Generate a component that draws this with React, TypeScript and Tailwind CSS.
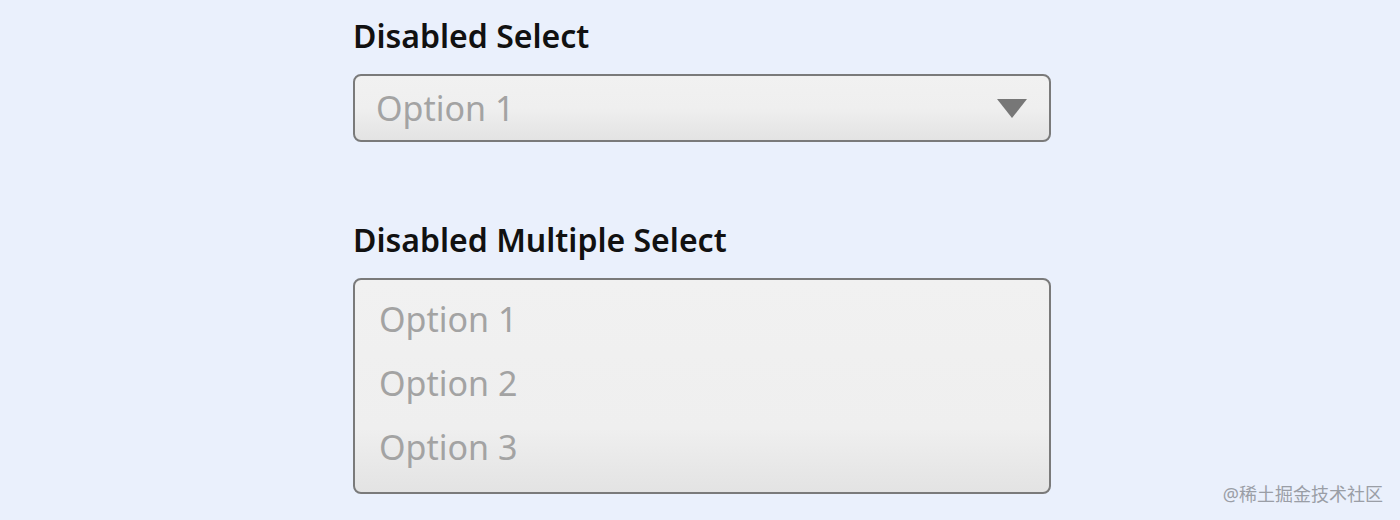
export default function App() {
  return (
    <div className="relative h-[520px] w-[1400px] overflow-hidden bg-[#eaf0fc] font-['Noto_Sans',sans-serif]">
      <div className="ml-[353px] flex w-[698px] flex-col pt-[14px]">
        <label className="text-[32px] font-semibold leading-[44px] text-[#111]">Disabled Select</label>
        <div className="mt-[16px] flex h-[68px] items-center justify-between rounded-[8px] border-2 border-[#7a7a7a] bg-gradient-to-b from-[#f1f1f1] via-[#efefef] to-[#e3e3e3] pl-[21px] pr-[22px]">
          <span className="text-[34px] leading-none text-[#a3a3a3]">Option 1</span>
          <svg width="30" height="20" viewBox="0 0 30 20" className="mt-[2px]">
            <polygon points="0,0 30,0 15,19" fill="#777" />
          </svg>
        </div>

        <label className="mt-[76px] text-[32px] font-semibold leading-[44px] text-[#111]">Disabled Multiple Select</label>
        <div className="mt-[16px] flex h-[216px] flex-col rounded-[8px] border-2 border-[#7a7a7a] bg-gradient-to-b from-[#f1f1f1] via-[#efefef] via-70% to-[#e3e3e3] pl-[24px] pt-[7px]">
          {['Option 1', 'Option 2', 'Option 3'].map((opt) => (
            <div key={opt} className="flex h-[64px] items-center text-[34px] leading-none text-[#a3a3a3]">
              {opt}
            </div>
          ))}
        </div>
      </div>
      <span className="absolute bottom-[17px] right-[17px] font-['Noto_Sans','Noto_Sans_CJK_SC',sans-serif] text-[18px] leading-none text-[#9a9ea6]">
        @稀土掘金技术社区
      </span>
    </div>
  );
}
